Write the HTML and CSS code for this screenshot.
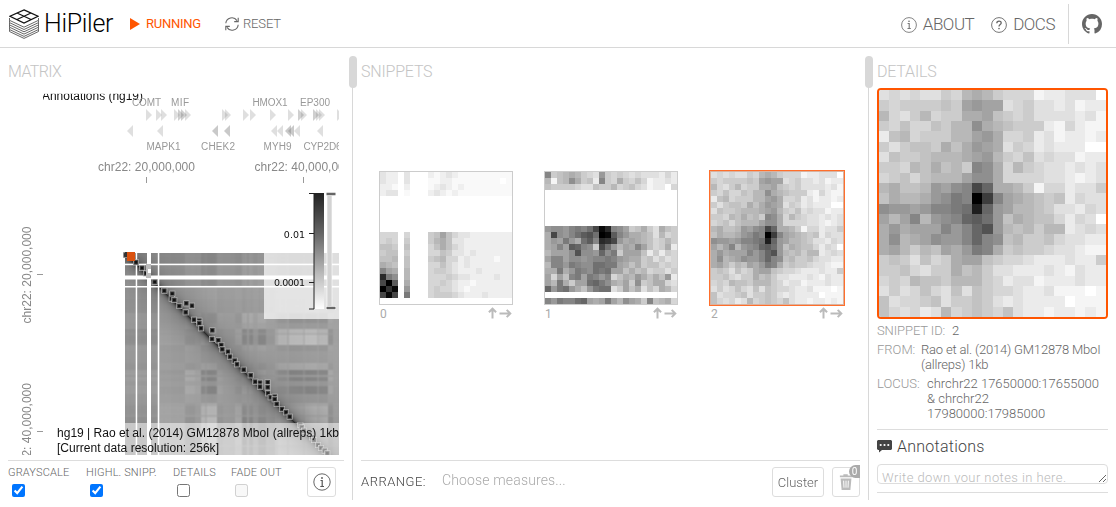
FILE: index.html
```html
<!DOCTYPE html>
<html lang="en">
<head>
<meta charset="utf-8">
<title>HiPiler</title>
<link rel="stylesheet" href="styles.css">
</head>
<body>
<header class="topbar">
  <svg class="logo" viewBox="0 0 30 30" width="30" height="30" fill="none" stroke="#222">
    <g stroke="#555" stroke-width=".9"><path d="M.5 9v2.3L15 18.2l14.5-6.9V9M.5 11.3v2.3L15 20.5l14.5-6.9v-2.3M.5 13.6v2.3L15 22.8l14.5-6.9v-2.3M.5 15.9v2.3L15 25.1l14.5-6.9v-2.3M.5 18.2v2.3L15 27.4l14.5-6.9v-2.3M.5 20.5v2L15 29.4l14.5-6.9v-2"/></g>
    <path d="M15 .9 29 7.2 15 14 1 7.2ZM8 4l14 6.5M22 4 8 10.5" fill="#fff" stroke="#111" stroke-width="1.2"/>
  </svg>
  <span class="brand">HiPiler</span>
  <span class="state"><svg width="10" height="12" viewBox="0 0 10 12"><path d="M0 0 10 6 0 12Z" fill="#ff5500"/></svg><span class="t-running">RUNNING</span></span>
  <span class="reset"><svg width="14" height="14" viewBox="0 0 14 14" fill="none" stroke="#666" stroke-width="1.1"><path d="M.8 6.3A6.1 6.1 0 0 1 12 3.6M13.2 7.7A6.1 6.1 0 0 1 2 10.4M13.2.8v3.8H9.2M.8 13.2V9.400H4.800"/></svg><span class="t-reset">RESET</span></span>
  <nav class="links">
    <span class="link"><svg width="16" height="16" viewBox="0 0 16 16" fill="none" stroke="#777"><circle cx="8" cy="8" r="7.4" stroke-width=".9"/><path d="M6.600 6.500H8.200V11.500M6.500 11.500H9.800" stroke-width="1.1"/><circle cx="8" cy="4.200" r=".8" fill="#666" stroke="none"/></svg><span class="t-about">ABOUT</span></span>
    <span class="link docs"><svg width="16" height="16" viewBox="0 0 16 16" fill="none" stroke="#666"><circle cx="8" cy="8" r="7.4" stroke-width=".9"/><path d="M5.800 6.200C5.800 3.300 10.200 3.400 10.200 6 10.200 7.600 8 7.600 8 9.600" stroke-width="1.300"/><circle cx="8" cy="11.600" r=".8" fill="#666" stroke="none"/></svg><span class="t-docs">DOCS</span></span>
    <span class="gh"><svg width="20" height="20" viewBox="0 0 16 16" fill="#666"><path d="M8 0C3.580 0 0 3.580 0 8c0 3.540 2.290 6.530 5.470 7.590.4.070.55-.17.55-.38 0-.19-.01-.82-.01-1.490-2.010.37-2.530-.49-2.690-.94-.09-.23-.48-.94-.82-1.130-.28-.15-.68-.52-.01-.53.63-.01 1.080.58 1.230.82.72 1.210 1.870.87 2.330.66.070-.52.28-.87.51-1.070-1.780-.2-3.640-.89-3.640-3.950 0-.87.31-1.590.82-2.150-.08-.2-.36-1.020.08-2.120 0 0 .67-.21 2.200.82.64-.18 1.320-.27 2-.27s1.360.09 2 .27c1.530-1.040 2.200-.82 2.200-.82.44 1.100.16 1.920.08 2.120.51.56.82 1.270.82 2.150 0 3.070-1.870 3.750-3.650 3.950.29.25.54.73.54 1.480 0 1.070-.01 1.930-.01 2.200 0 .21.15.46.55.38A8.010 8.010 0 0 0 16 8c0-4.420-3.580-8-8-8z"/></svg></span>
  </nav>
</header>
<main class="cols">
  <section class="col matrix">
    <h2 class="t-matrix">MATRIX</h2>
    <div class="plot">
      <canvas id="matrix" width="331" height="362"></canvas>
      <svg class="labels" width="331" height="362" viewBox="8 93 331 362">
        <text class="dark" x="42" y="100" textLength="101" lengthAdjust="spacingAndGlyphs">Annotations (hg19)</text>
        <rect x="40" y="91" width="104" height="2.800" fill="#fff"/><rect x="40" y="91" width="3" height="12" fill="#fff"/>
        <g class="gene" text-anchor="middle">
          <text x="146.500" y="106" textLength="29">COMT</text><text x="180" y="106" textLength="18">MIF</text><text x="270" y="106" textLength="35">HMOX1</text><text x="315" y="106" textLength="30">EP300</text>
          <text x="163.500" y="150" textLength="34">MAPK1</text><text x="218" y="150" textLength="34">CHEK2</text><text x="277.500" y="150" textLength="28">MYH9</text><text x="322.500" y="150" textLength="38">CYP2D6</text>
        </g>
        <g id="genes"></g>
        <g class="tick"><text x="98" y="171" textLength="97">chr22: 20,000,000</text><text x="254.500" y="171" textLength="97">chr22: 40,000,000</text>
          <text transform="translate(31 323.500) rotate(-90)" textLength="97">chr22: 20,000,000</text><text transform="translate(31 480) rotate(-90)" textLength="97">chr22: 40,000,000</text></g>
        <path d="M146.500 177v6M303.500 177v6M37 274.500h6M37 431.500h6" stroke="#999"/>
        <rect x="264" y="253" width="75" height="66" fill="#fff" opacity=".7"/>
        <defs><linearGradient id="ramp" x2="0" y2="1"><stop stop-color="#222"/><stop offset=".35" stop-color="#666"/><stop offset=".7" stop-color="#bbb"/><stop offset="1" stop-color="#fff"/></linearGradient></defs>
        <rect x="314" y="193" width="10" height="116" fill="url(#ramp)"/>
        <path d="M309 193.500h5v115.500h-5M309 233.500h5M309 282.500h5" fill="none" stroke="#222"/>
        <rect x="327" y="193" width="5" height="114" fill="#d3d3d3" stroke="#fff" stroke-width=".6"/>
        <path d="M326 194h10M326 308h10" stroke="#fff" stroke-width="4"/><path d="M326.500 194h9M326.500 308h9" stroke="#666" stroke-width="2.400"/>
        <g class="scale" text-anchor="end"><text x="305" y="237.500">0.01</text><text x="305" y="286" textLength="31">0.0001</text></g>
        <rect x="52" y="423" width="287" height="33" fill="#fff" opacity=".5"/>
        <g class="dark"><text x="57" y="437" textLength="282" lengthAdjust="spacingAndGlyphs">hg19 | Rao et al. (2014) GM12878 MboI (allreps) 1kb</text><text x="57" y="452" textLength="162" lengthAdjust="spacingAndGlyphs">[Current data resolution: 256k]</text></g>
      </svg>
    </div>
    <div class="tools">
      <label class="w1"><span class="t-gray">GRAYSCALE</span><input type="checkbox" checked></label>
      <label class="w2"><span class="t-high">HIGHL. SNIPP.</span><input type="checkbox" checked></label>
      <label class="w3"><span class="t-det">DETAILS</span><input type="checkbox"></label>
      <label class="w4"><span class="t-fade">FADE OUT</span><input type="checkbox" disabled></label>
      <button class="btn info"><svg width="18" height="18" viewBox="0 0 18 18" fill="none" stroke="#555"><circle cx="9" cy="9" r="8.200" stroke-width=".9"/><path d="M7.500 7.500H9.200V13.500M7.300 13.500H11" stroke-width="1.200"/><circle cx="9" cy="5" r=".9" fill="#555" stroke="none"/></svg></button>
    </div>
  </section>
  <section class="col snippets">
    <i class="handle"></i>
    <h2 class="t-snip">SNIPPETS</h2>
    <div class="piles">
      <figure class="pile"><canvas id="s0" width="132" height="132"></canvas><figcaption><span>0</span><svg width="24" height="12"><use href="#arrows"/></svg></figcaption></figure>
      <figure class="pile"><canvas id="s1" width="132" height="132"></canvas><figcaption><span>1</span><svg width="24" height="12"><use href="#arrows"/></svg></figcaption></figure>
      <figure class="pile active"><canvas id="s2" width="132" height="132"></canvas><figcaption><span>2</span><svg width="24" height="12"><g id="arrows" fill="none" stroke="#bbb" stroke-width="2"><path d="M4.500 11.500V2M.9 5.300 4.500 1.700 8.100 5.300M11.500 6.500H22M18.700 2.900 22.300 6.500 18.700 10.100"/></g></svg></figcaption></figure>
    </div>
    <div class="arrange">
      <span class="t-arr">ARRANGE:</span><span class="t-choose">Choose measures...</span>
      <button class="btn cluster"><span class="t-clu">Cluster</span></button>
      <button class="btn trash"><svg width="14" height="18" viewBox="0 0 16 19" fill="#bbb"><path d="M5 2V.5h5V2h5v2H1V2ZM1.800 5.500h12.400L13 18.500H3Z"/><path d="M5.300 8 5.700 16M8 8v8M10.700 8l-.4 8" stroke="#fff" stroke-width="1.100"/></svg><b class="badge">0</b></button>
    </div>
  </section>
  <section class="col details">
    <i class="handle"></i>
    <h2 class="t-detl">DETAILS</h2>
    <canvas id="big" class="big" width="227" height="227"></canvas>
    <dl>
      <div><dt class="t-id">SNIPPET ID:</dt><dd>2</dd></div>
      <div><dt class="t-from">FROM:</dt><dd><span class="t-f1">Rao et al. (2014) GM12878 MboI</span><br><span class="t-f2">(allreps) 1kb</span></dd></div>
      <div><dt class="t-loc">LOCUS:</dt><dd><span class="t-l1">chrchr22 17650000:17655000</span><br><span class="t-l2">&amp; chrchr22</span><br><span class="t-l3">17980000:17985000</span></dd></div>
    </dl>
    <div class="notes">
      <h3><svg width="15" height="13" viewBox="0 0 15 13"><path d="M1 0h13l1 1v8l-1 1H5L2 12.500V10H1L0 9V1Z" fill="#444"/><g fill="#fff"><circle cx="3.700" cy="5" r="1.100"/><circle cx="7.500" cy="5" r="1.100"/><circle cx="11.300" cy="5" r="1.100"/></g></svg><span class="t-ann">Annotations</span></h3>
      <textarea placeholder="Write down your notes in here."></textarea>
    </div>
  </section>
</main>
<script src="app.js"></script>
</body>
</html>
```
FILE: styles.css
```css
* { box-sizing: border-box; }
body { margin: 0; height: 507px; overflow: hidden; background: #fff; color: #666; font: 300 13px/15px Roboto, "Liberation Sans", sans-serif; }
span { white-space: nowrap; }
svg, canvas { display: block; flex: none; }
.topbar { height: 48px; border-bottom: 1px solid #d8d8d8; display: flex; align-items: center; padding: 0 8px 0 9px; }
.brand { width: 70px; margin-left: 5px; font-size: 25px; line-height: 30px; color: #000; letter-spacing: -.3px; }
.state, .reset, .link { display: flex; align-items: center; }
.state { margin-left: 16px; color: #ff5500; gap: 6px; width: 95px; letter-spacing: -.25px; }
.reset { gap: 4px; letter-spacing: -.15px; }
.t-running { font-weight: 400; }
.t-running, .t-reset { position: relative; }
.links { margin-left: auto; display: flex; align-items: center; font-size: 17px; }
.link { gap: 6px; padding-top: 2px; letter-spacing: -.5px; }
.docs { margin-left: 17px; }
.gh { margin-left: 13px; padding: 10px 6px 10px 13px; border-left: 1px solid #d8d8d8; }
.cols { display: flex; height: 452px; padding-top: 8px; }
.col { position: relative; height: 444px; padding: 8px 8px 0; display: flex; flex-direction: column; }
.matrix { width: 352px; }
.snippets { width: 516px; border-left: 1px solid #d8d8d8; }
.details { width: 248px; border-left: 1px solid #d8d8d8; }
.handle { position: absolute; left: -4px; top: 0; width: 8px; height: 32px; border-radius: 4px; background: #d8d8d8; }
h2 { margin: 0; font-size: 16px; line-height: 16px; font-weight: 300; color: #c4c4c4; letter-spacing: -.2px; }
.t-matrix { letter-spacing: -.6px; }
.plot { position: relative; margin-top: 13px; height: 362px; width: 331px; }
.labels { position: absolute; left: 0; top: 0; overflow: hidden; font-family: "Liberation Sans", Arial, sans-serif; font-weight: 400; }
.labels .dark { font-size: 12px; fill: #111; }
.gene { font-size: 10px; fill: #999; }
.tick { font-size: 12px; fill: #888; }
.scale { font: 10px "DejaVu Sans", sans-serif; fill: #111; }
.scale text { font-size: 9.500px; }
.tools { margin-top: 5px; height: 40px; border-top: 1px solid #ddd; display: flex; font-size: 11px; letter-spacing: .15px; }
.tools label { display: flex; flex-direction: column; padding-top: 4px; }
.tools input { margin: 4px 0 0 4px; width: 13px; height: 13px; }
.w1 { width: 78px; } .w2 { width: 87px; } .w3 { width: 58px; } .w4 { width: 76px; }
.btn { background: #fff; border: 1px solid #ddd; border-radius: 3px; padding: 0; color: #666; font: inherit; display: flex; align-items: center; justify-content: center; }
.info { margin-top: 6px; width: 29px; height: 30px; }
.piles { display: flex; gap: 31px; padding: 91px 0 0 18px; height: 380px; }
.pile { margin: 0; width: 134px; }
.pile canvas { width: 134px; height: 134px; border: 1px solid #ccc; }
.pile + .active { margin-left: 1px; }
.active canvas { border-color: #d9b3a0; outline: 1px solid #ff6f2c; }
figcaption { display: flex; justify-content: space-between; padding: 2px 1px; color: #aaa; font-size: 12px; font-weight: 400; }
.arrange { height: 40px; border-top: 1px solid #ddd; display: flex; align-items: flex-start; }
.arrange > .t-arr { width: 81px; padding-top: 13px; color: #444; letter-spacing: .5px; }
.t-choose { font-size: 14px; color: #aaa; padding-top: 12px; letter-spacing: .15px; }
.cluster { margin: 6px 8px 0 auto; width: 52px; height: 30px; }
.trash { position: relative; margin-top: 6px; width: 28px; height: 30px; }
.badge { position: absolute; right: -1px; top: -3px; width: 11px; height: 13px; border-radius: 7px 0 0 7px; background: #aaa; color: #fff; font: 400 10px/13px Roboto, sans-serif; }
.big { width: 231px; height: 231px; margin-top: 8px; border: 2px solid #ff5500; border-radius: 4px; }
dl { margin: 4px 0 0; }
dl div { display: flex; margin-bottom: 4px; }
dt { color: #999; white-space: nowrap; }
dd { margin: 0; }
.t-f1 { letter-spacing: -.18px; } .t-f2 { letter-spacing: -.2px; } .t-id { letter-spacing: -.1px; }
.t-id { width: 75px; } .t-from { width: 44px; } .t-loc { width: 50px; }
.notes { margin-top: 4px; padding-top: 8px; border-top: 1px solid #ddd; border-bottom: 1px solid #ddd; height: 64px; }
h3 { margin: 0 0 9px; font-weight: 300; font-size: 16px; line-height: 17px; color: #444; display: flex; align-items: center; gap: 5px; }
.t-ann { letter-spacing: .25px; }
textarea { display: block; width: 231px; height: 20px; border: 1px solid #ddd; border-radius: 4px; padding: 5px 4px 0; font: 300 13px/15px Roboto, sans-serif; letter-spacing: .42px; overflow: hidden; }
textarea::placeholder { color: #bbb; }
```
FILE: app.js
```js
// Gray levels are written as letters: a is black, z is white, a dot is a missing bin.
const gap = n => Array(n).fill("");
const piles = {
  s0: ["wxx.w...xyxwxyyyyyyyyy","wxx.w...yyxxyyyyyyyyzy","xxy.x...yxwxyxyyyyyyyy","xww.y...xwxyxyyyyyyyyy",...gap(6),
    "vvv.v...utqtvwwxxxxxxx","vuv.u...usrtwwxxxxxxxx","ttu.t...vtrtvwxxxxxxxx","utt.u...vvtuwwxwxxxxxx","tts.t...utsvvxwxxxxyxx","rst.t...vvtvwxwxxxxxxx","nqr.s...vuuvwxxxwxxxxx","emo.s...vvvuvwwxxxxwxx","haj.r...vvuvwxxyxxxxxx","afb.p...vuvvwxyxxxxxxx","hbh.m...vuuuvwxxxwxxxx",""],
  s1: ["nutsrsuvwpuvuvwvwwwxvx","sytsorutxnuvruvtvyxxwx","tuuuuvwwtuusvutvwyxxzv",...gap(6),
    "poopnmnlhbenoqutruwrtu","rhopnljilabjnprrstwsvu","rpqmprljnefhprqrstvusu","rqnqjknouhlpsqrnqtvurx","sqqqoioopkomuqqqtxuxuv","qnnqooponnmnpqrrutwuwv","snnpmnoollmmqrtruttvuv","rrmrpmnolmlqqtrtsvuuwu","qvqtnmqmnpnvtrsprtrtpx","qsmruqqlkmorsquoutrrvw","kpmlprtpmllwuqtrwtvrsv","","npmnnlkqrqmqsoqruntsrv"],
  s2: ["wvwvwwuvsrsuvvvyxxwwwz","uvuuuutuqpqqwvuwwxwyxx","svwusvuurrqtuvuwwwwxwy","uvtvvtussorstuuuxyvxyy","xtsvuuussqprvvuxwyxxyx","uwutturtrpqrwuvxwxxxzz","wtuutsssrqpsuvtwvwwyxx","uuvstrtsunorvsuvwwxwxw","vutvtsssqoorvvvvwwxyxw","srttspqonhkrrsuyvvxwwu","trssrpomnagnqrstutxvww","oppqpnnmldkpqsstuwwxvw","qsqnsponkjlptrsttvxvwz","rprqqqnpnkipstsussxwvw","rosrqoppnknotsuutvwwxx","rqsustqrpmnrutuuvwwxyy","utuwtvurqqtuvvwxxxwxxu","uutvwuurtsuwwxxxwxywxx","vuvsttusssuvxwwyxxxwxx","wuwvtvwtwtuvvwxxwyyyzy","twvvutwuutuwxwxxxxzyyy","tvwvxwsvutuvtwxxyxxyxy"]
};
function heat(id, rows) {
  const c = document.getElementById(id), g = c.getContext("2d"), s = c.width / 22;
  g.fillStyle = "#fff"; g.fillRect(0, 0, c.width, c.width);
  rows.forEach((r, y) => [...r].forEach((ch, x) => {
    if (ch === ".") return;
    let v = Math.round((ch.charCodeAt(0) - 97) * 10.2);
    if (id === "s0" && v > 220) v += 4;
    g.fillStyle = `rgb(${v},${v},${v})`;
    const x0 = Math.round(x * s), y0 = Math.round(y * s);
    g.fillRect(x0, y0, Math.round((x + 1) * s) - x0, Math.round((y + 1) * s) - y0);
  }));
}
for (const id in piles) heat(id, piles[id]);
heat("big", piles.s2);

// Contact matrix: origin at (125, 253) of the page, plot origin at (8, 93).
const g = document.getElementById("matrix").getContext("2d");
const ox = 117, oy = 160;
const bands = [[0,34,-.25],[34,60,.12],[60,70,-.45],[70,76,-.2],[76,80,.7],[80,82,.4],[82,92,.85],[92,98,-.3],[98,110,-.1],[110,117,.3],[117,122,-.75],[122,124,-.1],[124,128,-.75],[128,133,-.2],[133,141,-.7],[141,150,-.15],[150,153,.3],[153,162,.65],[162,164,.3],[164,178,.85],[178,180,.5],[180,192,.9],[192,194,.5],[194,203,.75],[203,208,-.4],[208,230,0]];
const raw = u => bands.find(b => u < b[1])[2];
const band = u => (raw(Math.max(0, u - 1)) + raw(u) * 2 + raw(u + 1)) / 4;
const noise = u => Math.sin(u * 12.9898) * 43758.5453 % 1;
for (let y = 0; y < 202; y += 1) for (let x = 0; x < 214; x += 1) {
  const d = Math.abs(x - y);
  const a = band(x), b = band(y);
  let v = 152 + Math.min(d, 100) * .08 - 70 * Math.exp(-d / 3) - 38 * Math.exp(-d / 14);
  v += a * b * (a > 0 ? 38 : 34) * Math.min(1, d / 45);
  v += (noise(x >> 1) + noise(y >> 1)) * 1.2;
  if (x < 32 || y < 32) v -= 9;
  if (y < 10) v -= 9;
  v = Math.round(Math.max(0, v));
  g.fillStyle = `rgb(${v},${v},${v})`;
  g.fillRect(ox + x, oy + y, 1, 1);
}
g.fillStyle = "#fff";
for (const [p, w] of [[10.7, 1.5], [22, 4], [32.8, 1.5]]) g.fillRect(ox + p, oy, w, 202);
for (const [p, w] of [[10.7, 1.5], [22.5, 4], [33, 1.5]]) g.fillRect(ox, oy + p, 214, w);

const spots = [[378,15],[408,37],[426,54],[438,70],[464,96],[493,122],[517,131],[515,146],[523,150],[538,168],[559,160],[576,167],[557,187],[582,209],[598,212],[598,220],[603,235],[637,241],[636,267],[655,271],[664,285],[667,298],[684,305],[690,320],[704,332],[711,343],[731,359],[752,376],[766,395],[780,398],[780,410],[803,397],[803,412],[804,430],[812,442],[824,440],[824,448],[830,462],[846,477],[858,487],[869,500],[901,525],[905,532],[912,542],[928,550],[936,562],[942,570],[954,585],[963,594],[974,602],[982,610]];
for (const [x, y] of spots) {
  const px = x / 3 - 8, py = 250 + y / 3 - 93;
  g.fillStyle = "#b4b4b4"; g.fillRect(px - 3, py - 3, 6, 6);
  g.fillStyle = "#444"; g.fillRect(px - 2.3, py - 2.3, 4.6, 4.6);
  g.fillStyle = "#111"; g.fillRect(px - 1.3, py - 1.3, 2.6, 2.6);
}
g.fillStyle = "#bbb"; g.fillRect(138, 171, 5, 14);
g.fillStyle = "#fff"; g.fillRect(140, 176, 3, 4);
g.fillStyle = "#d9510f"; g.fillRect(119, 159, 8, 9);
g.fillStyle = "#333"; g.fillRect(117, 159, 2, 5);

// Gene markers: forward strand above, reverse strand below.
const mark = (x, y, dir, o) => `<path d="M${x} ${y - 6}l${6 * dir} 6l${-6 * dir} 6z" fill="#888" opacity="${o}"/>`;
document.getElementById("genes").innerHTML =
  [146,156,161,174,178,181,185,222,225,243,250,270,288,298,301,313,316,319,337].map((x, i) => mark(x, 115, 1, [4,5,13,15].includes(i) ? .4 : .27)).join("") +
  [133,163,218,230,277,283,291,294,300,323].map((x, i) => mark(x, 131, -1, [2,3,6,7].includes(i) ? .45 : .27)).join("");
```
